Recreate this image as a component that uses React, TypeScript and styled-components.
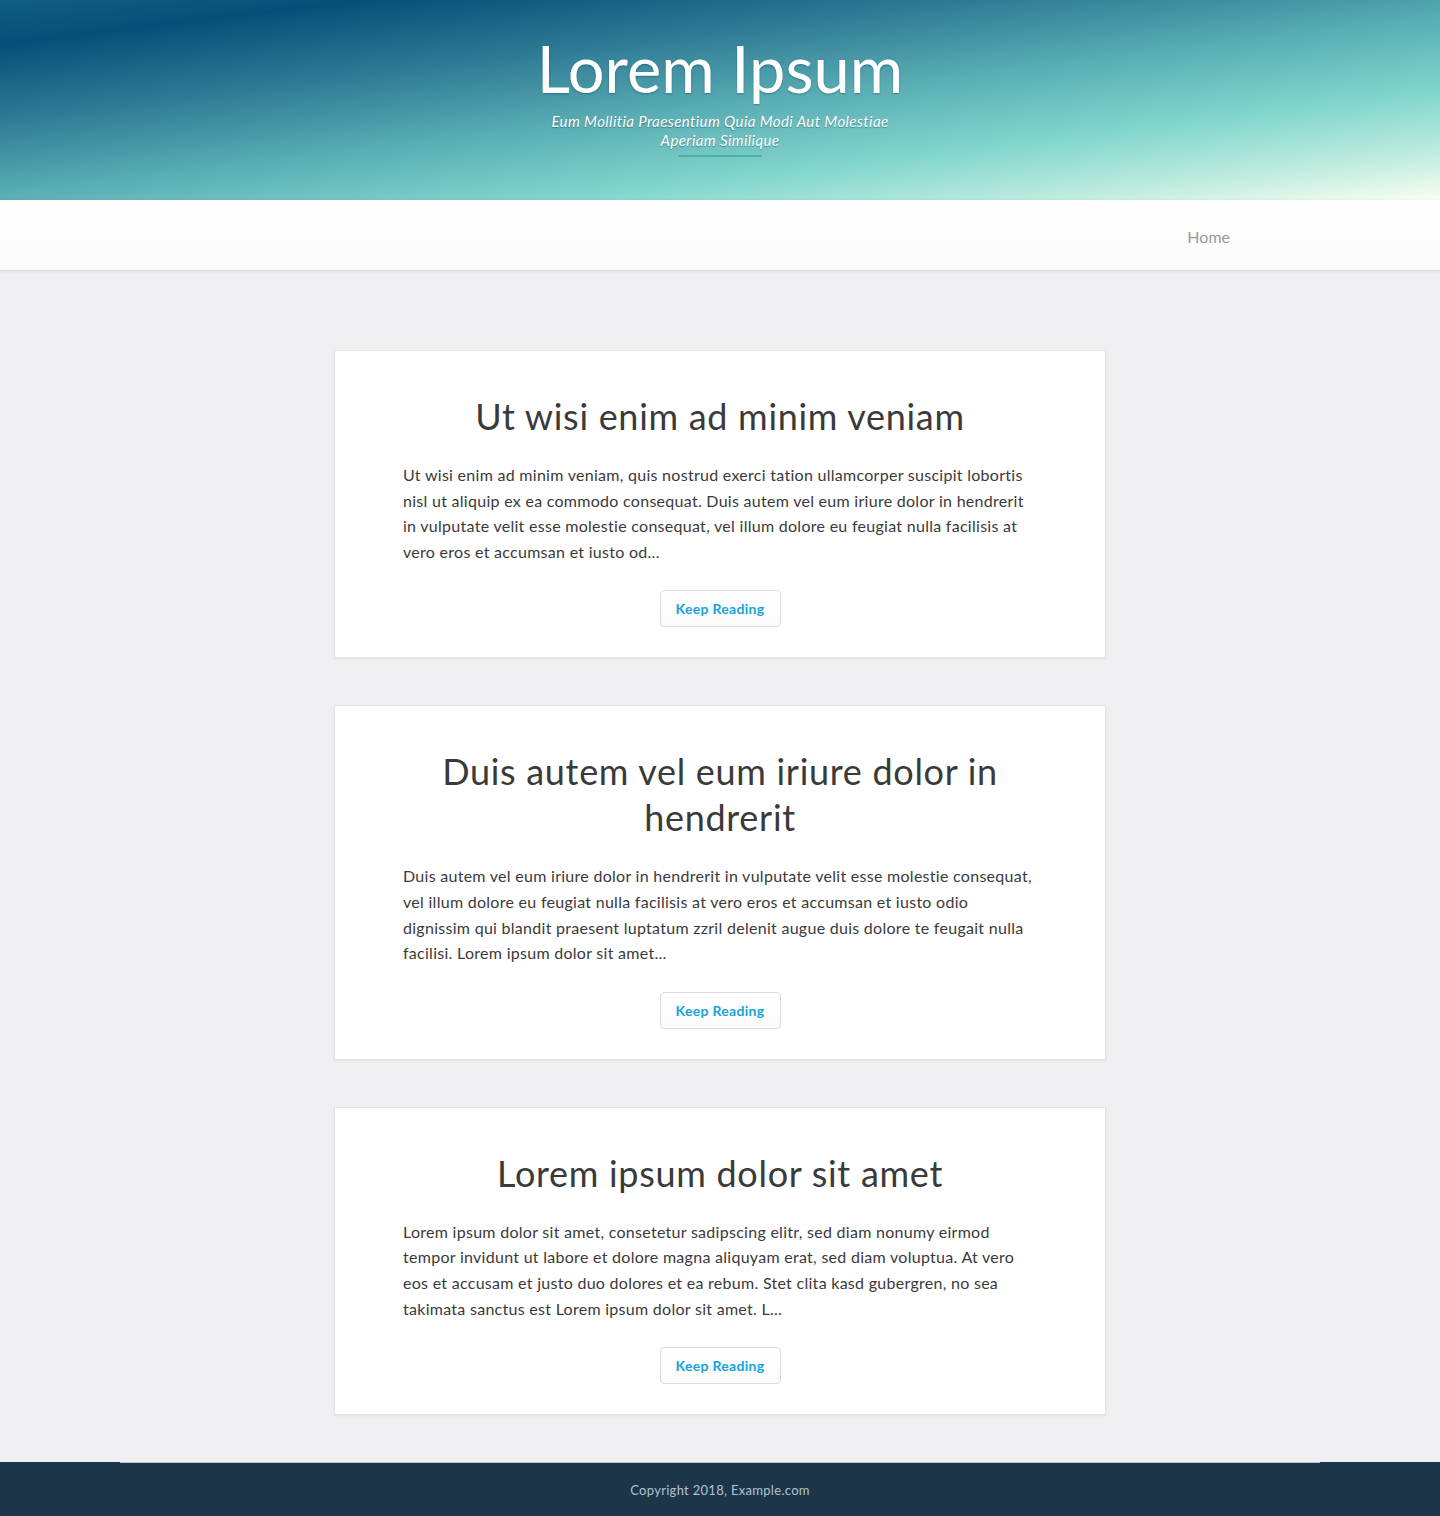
import React from "react";
import styled, { createGlobalStyle } from "styled-components";

const GlobalStyle = createGlobalStyle`
  * { box-sizing: border-box; }
  html, body { margin: 0; padding: 0; }
  body {
    background: #f0f0f2;
    font-family: Lato, "Liberation Sans", sans-serif;
    color: #333;
  }
`;

const Page = styled.div`
  min-height: 1516px;
  display: flex;
  flex-direction: column;
  background: #f0f0f2;
`;

const Header = styled.header`
  height: 200px;
  display: flex;
  flex-direction: column;
  align-items: center;
  padding-top: 28px;
  background: linear-gradient(
    173deg,
    #115d83 0%,
    #074f78 12%,
    #2f7b95 32%,
    #5aaeb4 52%,
    #84d7cd 72%,
    #c2ede0 88%,
    #f8fff2 100%
  );
`;

const SiteTitle = styled.h1`
  margin: 0;
  font-family: Lato, "Liberation Sans", sans-serif;
  font-weight: 400;
  font-size: 65px;
  line-height: 80px;
  color: #fff;
  text-shadow: 0 1px 2px rgba(0, 40, 60, 0.35);
`;

const Tagline = styled.p`
  margin: 4px 0 0;
  max-width: 350px;
  text-align: center;
  font-style: italic;
  font-size: 15px;
  letter-spacing: 0.4px;
  line-height: 19px;
  color: #fff;
  text-shadow: 0 1px 1px rgba(0, 40, 60, 0.4);
`;

const TaglineRule = styled.div`
  width: 84px;
  height: 2px;
  margin-top: 5px;
  background: #4ab3a6;
`;

const Nav = styled.nav`
  height: 70px;
  background: linear-gradient(180deg, #ffffff 0%, #fafafa 100%);
  box-shadow: 0 1px 3px rgba(0, 0, 0, 0.12);
  display: flex;
  justify-content: center;
  position: relative;
  z-index: 1;
`;

const NavInner = styled.div`
  width: 1200px;
  display: flex;
  justify-content: flex-end;
  align-items: center;
  padding-right: 90px;
  padding-top: 3px;
`;

const NavLink = styled.a`
  font-size: 16px;
  color: #9a9a9a;
  text-decoration: none;
`;

const Main = styled.main`
  flex: 1;
  display: flex;
  flex-direction: column;
  align-items: center;
  gap: 47px;
  padding: 80px 0 47px;
`;

const Card = styled.article`
  width: 772px;
  background: #fff;
  border: 1px solid #e4e4e6;
  box-shadow: 0 1px 2px rgba(0, 0, 0, 0.06);
  padding: 42px 68px 30px;
  display: flex;
  flex-direction: column;
  align-items: center;
`;

const CardTitle = styled.h2`
  margin: 0 0 23px;
  font-weight: 400;
  font-size: 36px;
  letter-spacing: 0.7px;
  line-height: 46px;
  color: #3a3a3a;
  text-align: center;
`;

const CardText = styled.p`
  margin: 0 0 26px;
  align-self: stretch;
  font-size: 16px;
  letter-spacing: 0.28px;
  line-height: 25.6px;
  color: #3a3a3a;
`;

const ReadButton = styled.a`
  display: inline-flex;
  align-items: center;
  justify-content: center;
  width: 121px;
  height: 37px;
  border: 1px solid #dcdcdc;
  border-radius: 4px;
  background: linear-gradient(180deg, #ffffff 0%, #fbfbfb 100%);
  color: #17a3d8;
  font-weight: 700;
  font-size: 14px;
  letter-spacing: 0.3px;
  text-decoration: none;
`;

const Footer = styled.footer`
  background: #1c3549;
  display: flex;
  justify-content: center;
`;

const FooterInner = styled.div`
  width: 1200px;
  height: 54px;
  border-top: 1px solid #c4c5c9;
  display: flex;
  align-items: center;
  justify-content: center;
  font-size: 13px;
  letter-spacing: 0.3px;
  color: #b3c3d0;
`;

const posts = [
  {
    title: "Ut wisi enim ad minim veniam",
    text:
      "Ut wisi enim ad minim veniam, quis nostrud exerci tation ullamcorper suscipit lobortis nisl ut aliquip ex ea commodo consequat. Duis autem vel eum iriure dolor in hendrerit in vulputate velit esse molestie consequat, vel illum dolore eu feugiat nulla facilisis at vero eros et accumsan et iusto od...",
  },
  {
    title: "Duis autem vel eum iriure dolor in hendrerit",
    text:
      "Duis autem vel eum iriure dolor in hendrerit in vulputate velit esse molestie consequat, vel illum dolore eu feugiat nulla facilisis at vero eros et accumsan et iusto odio dignissim qui blandit praesent luptatum zzril delenit augue duis dolore te feugait nulla facilisi. Lorem ipsum dolor sit amet...",
  },
  {
    title: "Lorem ipsum dolor sit amet",
    text:
      "Lorem ipsum dolor sit amet, consetetur sadipscing elitr, sed diam nonumy eirmod tempor invidunt ut labore et dolore magna aliquyam erat, sed diam voluptua. At vero eos et accusam et justo duo dolores et ea rebum. Stet clita kasd gubergren, no sea takimata sanctus est Lorem ipsum dolor sit amet. L...",
  },
];

export default function App() {
  return (
    <Page>
      <GlobalStyle />
      <Header>
        <SiteTitle>Lorem Ipsum</SiteTitle>
        <Tagline>Eum Mollitia Praesentium Quia Modi Aut Molestiae Aperiam Similique</Tagline>
        <TaglineRule />
      </Header>
      <Nav>
        <NavInner>
          <NavLink href="#">Home</NavLink>
        </NavInner>
      </Nav>
      <Main>
        {posts.map((p) => (
          <Card key={p.title}>
            <CardTitle>{p.title}</CardTitle>
            <CardText>{p.text}</CardText>
            <ReadButton href="#">Keep Reading</ReadButton>
          </Card>
        ))}
      </Main>
      <Footer>
        <FooterInner>Copyright 2018, Example.com</FooterInner>
      </Footer>
    </Page>
  );
}
